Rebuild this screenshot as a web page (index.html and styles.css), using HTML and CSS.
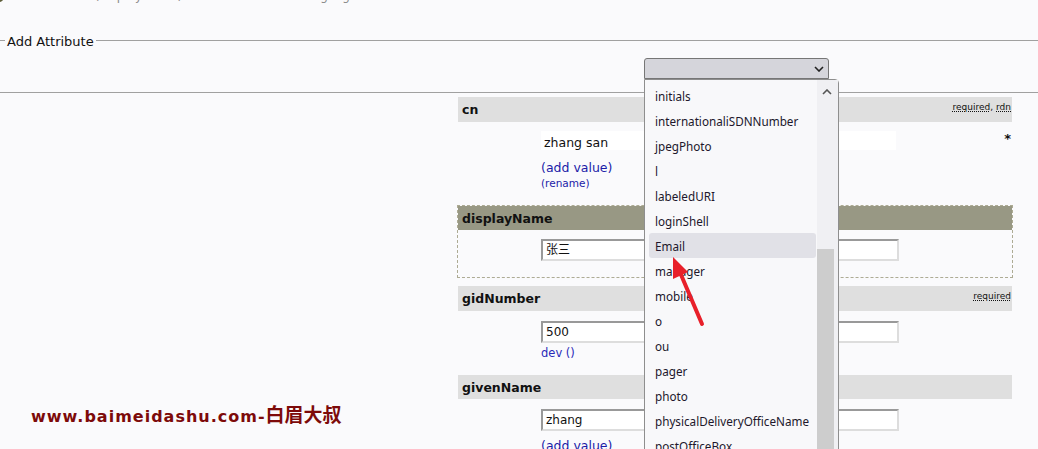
FILE: index.html
```html
<!DOCTYPE html>
<html lang="en">
<head>
    <meta charset="UTF-8">
    <title>Add Attribute</title>
    <link rel="stylesheet" href="styles.css">
</head>
<body>

    <div class="notice"><span class="notice-icon"></span>An attribute (displayName) was modified and is highlighted below.</div>

    <fieldset class="add-attr">
        <legend>Add Attribute</legend>
        <div class="picker">
            <div class="select-box">
                <svg class="chevron" width="10" height="6" viewBox="0 0 10 6"><path d="M1 1 L5 5 L9 1" fill="none" stroke="#222" stroke-width="1.6"/></svg>
            </div>
            <!-- open list of the select -->
            <div class="dropdown">
                <ul class="options">
                    <li>initials</li>
                    <li>internationaliSDNNumber</li>
                    <li>jpegPhoto</li>
                    <li>l</li>
                    <li>labeledURI</li>
                    <li>loginShell</li>
                    <li class="hover">Email</li>
                    <li>manager</li>
                    <li>mobile</li>
                    <li>o</li>
                    <li>ou</li>
                    <li>pager</li>
                    <li>photo</li>
                    <li>physicalDeliveryOfficeName</li>
                    <li>postOfficeBox</li>
                </ul>
                <div class="scroll">
                    <svg class="scroll-up" width="10" height="6" viewBox="0 0 10 6"><path d="M1 5 L5 1 L9 5" fill="none" stroke="#555" stroke-width="1.6"/></svg>
                    <div class="thumb"></div>
                </div>
            </div>
        </div>
    </fieldset>

    <div class="attrs">
        <div class="attr attr-cn">
            <div class="attr-head"><span>cn</span><span class="flags"><abbr>required</abbr>, <abbr>rdn</abbr></span></div>
            <div class="attr-body">
                <div class="val">
                    <div class="plain-val">zhang san</div>
                    <a class="link" href="#">(add value)</a>
                    <a class="link small" href="#">(rename)</a>
                </div>
                <div class="mark">*</div>
            </div>
        </div>

        <div class="attr attr-mod">
            <div class="attr-head"><span>displayName</span></div>
            <div class="attr-body">
                <div class="val">
                    <div class="field">张三</div>
                </div>
            </div>
        </div>

        <div class="attr attr-gid">
            <div class="attr-head"><span>gidNumber</span><span class="flags"><abbr>required</abbr></span></div>
            <div class="attr-body">
                <div class="val">
                    <div class="field">500</div>
                    <a class="link dev" href="#">dev ()</a>
                </div>
            </div>
        </div>

        <div class="attr attr-given">
            <div class="attr-head"><span>givenName</span></div>
            <div class="attr-body">
                <div class="val">
                    <div class="field">zhang</div>
                    <a class="link" href="#">(add value)</a>
                </div>
            </div>
        </div>
    </div>

    <div class="watermark">www.baimeidashu.com-<span class="cjk">白眉大叔</span></div>

    <svg class="arrow" width="1038" height="449" viewBox="0 0 1038 449">
        <line x1="702" y1="324" x2="679" y2="270" stroke="#e8202a" stroke-width="4" stroke-linecap="round"/>
        <polygon points="673,257 688,272 673,279" fill="#e8202a"/>
    </svg>

</body>
</html>
```

FILE: styles.css
```css
body {
    margin: 0;
    background-color: #fafafc;
    font-family: "DejaVu Sans", Verdana, sans-serif;
    font-size: 12px;
    color: #111;
    overflow: hidden;
    height: 449px;
}

.notice {
    position: relative;
    margin-top: -12px;
    height: 16px;
    line-height: 16px;
    padding-left: 19px;
    color: #8c8c8c;
}

.notice-icon {
    position: absolute;
    left: -6px;
    top: 4px;
    width: 10px;
    height: 10px;
    border-radius: 50%;
    background-color: #5e5e3a;
}

.add-attr {
    margin: 26px 0 0;
    padding: 8px 0 13px 5px;
    border: 0;
    border-top: 1px solid #a0a0a0;
    border-bottom: 1px solid #a0a0a0;
}

.add-attr legend {
    padding: 4px 2px 0;
    font-size: 13px;
    line-height: 16px;
    color: #111;
}

.picker {
    position: relative;
    margin-left: 639px;
    width: 185px;
}

.select-box {
    position: relative;
    height: 19px;
    border: 1px solid #767676;
    border-radius: 3px 3px 0 0;
    background-color: #d5d5db;
}

.chevron {
    position: absolute;
    right: 4px;
    top: 7px;
}

.dropdown {
    position: absolute;
    top: 21px;
    left: 0;
    width: 193px;
    height: 380px;
    border: 1px solid #8e8e8e;
    border-radius: 0 4px 0 0;
    background-color: #f8f8fa;
    display: flex;
    z-index: 5;
}

.options {
    list-style: none;
    margin: 0;
    padding: 3px 1px 0 4px;
    width: 167px;
}

.options li {
    height: 25px;
    box-sizing: border-box;
    padding: 2px 0 0 6px;
    line-height: 23px;
    font-family: "Noto Sans", "Open Sans", sans-serif;
    font-size: 11.7px;
    color: #21172b;
    border-radius: 3px;
    white-space: nowrap;
}

.options li.hover {
    background-color: #e1e1e7;
}

.scroll {
    position: relative;
    width: 21px;
    background-color: #f0f0f3;
}

.scroll-up {
    position: absolute;
    left: 5px;
    top: 9px;
}

.thumb {
    margin-top: 169px;
    width: 17px;
    height: 300px;
    background-color: #cdcdcd;
}

.attrs {
    margin: 4px 0 0 458px;
    width: 554px;
}

.attr-head {
    display: flex;
    align-items: center;
    justify-content: space-between;
    height: 25px;
    padding: 0 1px 0 4px;
    background-color: #dfdfdf;
    font-weight: bold;
    font-size: 12.5px;
}

.flags {
    font-weight: normal;
    font-size: 9px;
    align-self: flex-start;
    margin-top: 5px;
}

.flags abbr {
    text-decoration: underline dotted;
}

.attr-body {
    display: flex;
    padding-left: 83px;
}

.val {
    width: 358px;
    display: flex;
    flex-direction: column;
    align-items: flex-start;
}

.mark {
    margin-left: auto;
    margin-right: 1px;
    margin-top: 0;
    font-size: 13px;
    font-weight: bold;
}

.plain-val {
    width: 352px;
    height: 19px;
    line-height: 23px;
    padding-left: 3px;
    background-color: #fff;
    font-size: 12.5px;
}

.field {
    box-sizing: border-box;
    width: 358px;
    height: 22px;
    line-height: 18px;
    padding-left: 3px;
    border: 2px solid;
    border-color: #999 #ddd #ddd #999;
    background-color: #fff;
    font-family: "DejaVu Sans", "Noto Sans CJK SC", sans-serif;
}

.link {
    color: #1c1ca8;
    text-decoration: none;
    font-size: 12.5px;
    line-height: 16px;
    margin-top: 10px;
}

.link.small {
    font-size: 10.5px;
    line-height: 14px;
    margin-top: 0;
}

.link.dev {
    font-size: 11.5px;
    margin-top: 2px;
    color: #2a2ab8;
}

.attr-cn .attr-body {
    padding-top: 9px;
    padding-bottom: 15px;
}

.attr-mod {
    margin-top: 1px;
    outline: 1px dashed #adab94;
}

.attr-mod .attr-head {
    height: 24px;
    background-color: #989884;
}

.attr-mod .attr-body {
    padding-top: 9px;
    padding-bottom: 16px;
}

.attr-gid {
    margin-top: 9px;
}

.attr-gid .attr-body {
    padding-top: 10px;
    padding-bottom: 14px;
}

.attr-given .attr-head {
    height: 24px;
}

.attr-given .attr-body {
    padding-top: 10px;
}

.attr-given .link {
    margin-top: 7px;
}

.watermark {
    position: absolute;
    left: 31px;
    top: 400px;
    font-family: "DejaVu Sans", sans-serif;
    font-weight: bold;
    font-size: 16px;
    color: #7d0a0a;
    letter-spacing: 1px;
}

.watermark .cjk {
    font-family: "Noto Sans CJK SC", sans-serif;
    font-size: 19px;
    letter-spacing: 0;
}

.arrow {
    position: absolute;
    left: 0;
    top: 0;
    pointer-events: none;
    z-index: 10;
}
```
